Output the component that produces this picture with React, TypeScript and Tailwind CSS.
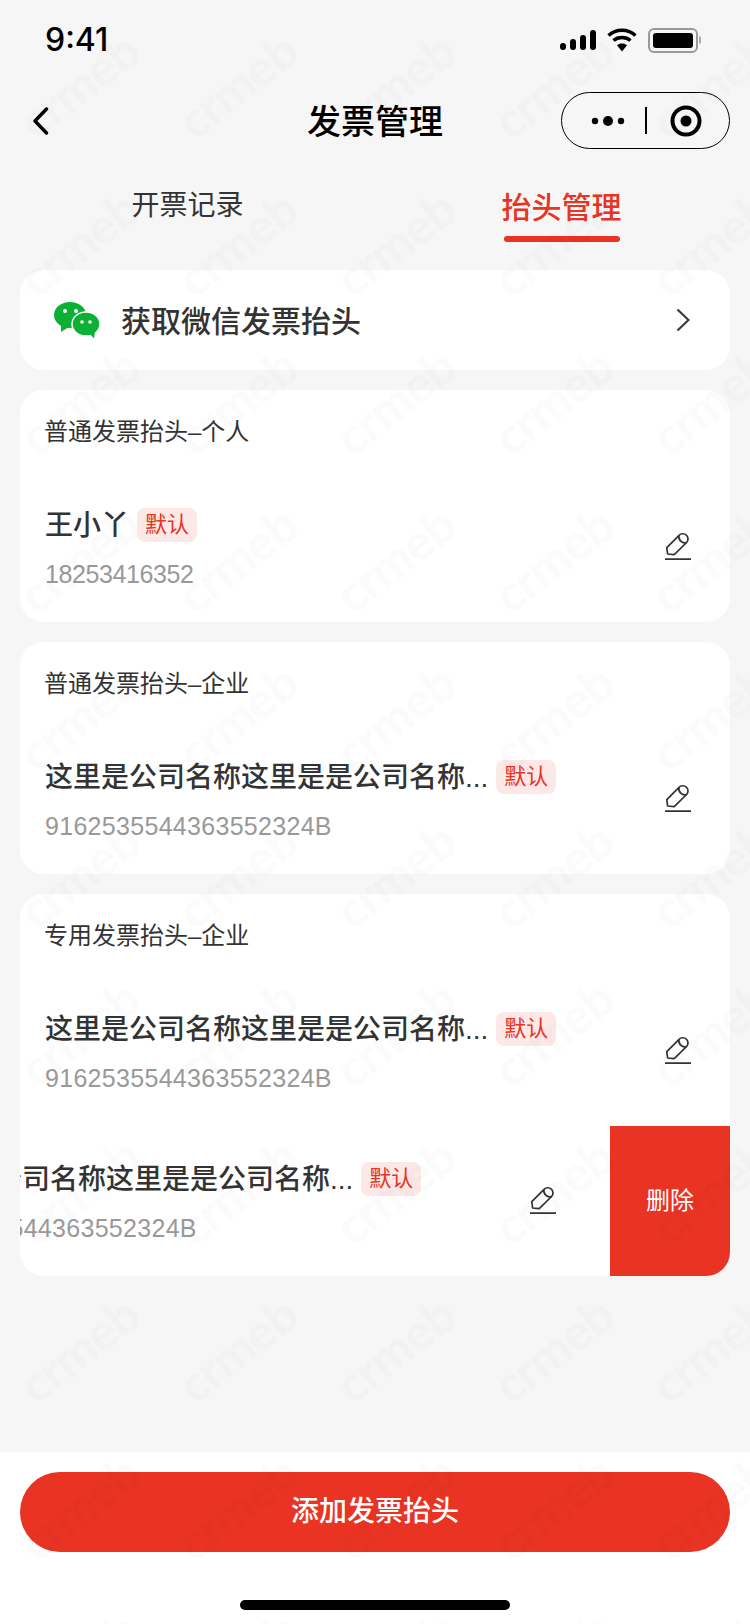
const FONT = "font-['Liberation_Sans','Noto_Sans_CJK_SC',sans-serif]";

interface RowProps {
  name: string;
  code: string;
  wide?: boolean;
}

function EditIcon() {
  return (
    <svg width="28" height="30" viewBox="0 0 28 30" fill="none" stroke="#333333" strokeWidth="1.7">
      <path d="M3.6 22 L2.8 15.6 L15 3.4 a5.2 5.2 0 0 1 7.6 7.1 L10.2 22.6 Z" strokeLinejoin="round" />
      <path d="M15 3.4 a6 6 0 0 0 7.6 7.1" />
      <path d="M1 27.2 H27" />
    </svg>
  );
}

function Badge() {
  return (
    <span className="ml-2 flex h-[34px] w-[60px] shrink-0 items-center justify-center rounded-lg bg-[#fce9e7] text-[22px] text-[#e93323]">
      默认
    </span>
  );
}

function InvoiceRow({ name, code, wide }: RowProps) {
  return (
    <div className="flex h-[150px] items-center justify-between pr-[38px] pl-[25px]">
      <div className="flex flex-col gap-[17px] pt-[2px]">
        <div className="flex h-[34px] items-center">
          <span className="whitespace-nowrap pt-[2px] text-[28px] font-medium text-[#333333]">{name}</span>
          <Badge />
        </div>
        <span className={`h-[30px] whitespace-nowrap text-[25px] leading-[30px] text-[#999999] ${wide ? "tracking-[0.3px]" : "tracking-[-0.4px]"}`}>
          {code}
        </span>
      </div>
      <EditIcon />
    </div>
  );
}

function Watermark() {
  const cells = Array.from({ length: 55 });
  return (
    <div className="pointer-events-none absolute inset-0 grid grid-cols-[repeat(5,158px)] auto-rows-[158px] overflow-hidden pt-[6px]">
      {cells.map((_, i) => (
        <div key={i} className="flex items-center justify-center">
          <span className="-rotate-[38deg] font-['Lato',sans-serif] text-[50px] font-black tracking-[-1px] text-black/[0.014]">
            crmeb
          </span>
        </div>
      ))}
    </div>
  );
}

export default function App() {
  const longName = "这里是公司名称这里是是公司名称...";
  const longCode = "9162535544363552324B";

  return (
    <div className={`relative flex h-[1624px] w-[750px] flex-col overflow-hidden bg-[#f6f6f6] ${FONT}`}>
      {/* 状态栏 */}
      <div className="flex h-[80px] items-center justify-between pr-[49px] pl-[45px]">
        <span className="font-['Inter',sans-serif] text-[32px] font-medium leading-none text-black">9:41</span>
        <div className="flex items-center gap-[11px]">
          <svg width="36" height="20" viewBox="0 0 36 20" fill="#000">
            <rect x="0" y="13" width="6" height="7" rx="3" />
            <rect x="10" y="9" width="6" height="11" rx="3" />
            <rect x="20" y="5" width="6" height="15" rx="3" />
            <rect x="30" y="0" width="6" height="20" rx="3" />
          </svg>
          <svg width="30" height="24" viewBox="0 0 30 24" fill="none" stroke="#000" strokeWidth="3.4">
            <path d="M1.5 7.5 C9 0.5 21 0.5 28.5 7.5" />
            <path d="M6.5 12.5 C11 8.5 19 8.5 23.5 12.5" />
            <path d="M15 23.5 L10 17.2 C12.8 15 17.2 15 20 17.2 Z" fill="#000" stroke="none" />
          </svg>
          <div className="flex items-center">
            <div className="h-[25px] w-[50px] rounded-[6px] border-2 border-[#999999] p-[3px]">
              <div className="h-full w-full rounded-[3px] bg-black" />
            </div>
            <div className="ml-[1px] h-[8px] w-[2px] rounded-r bg-[#aaaaaa]" />
          </div>
        </div>
      </div>

      {/* 导航栏 */}
      <div className="relative mt-[12px] flex h-[57px] items-center justify-between pr-[20px] pl-[32px]">
        <svg width="17" height="28" viewBox="0 0 17 28" fill="none" stroke="#000" strokeWidth="3.4" strokeLinecap="round" strokeLinejoin="round">
          <path d="M14.5 2 L3 14 L14.5 26" />
        </svg>
        <span className="absolute left-[307px] pt-[2px] text-[34px] font-medium leading-none text-black">发票管理</span>
        <div className="flex h-[57px] w-[169px] items-center rounded-full border-[1.5px] border-black pl-[29px]">
          <svg width="34" height="12" viewBox="0 0 34 12" fill="#000">
            <circle cx="4" cy="6" r="3.2" />
            <circle cx="17" cy="6" r="5" />
            <circle cx="30" cy="6" r="3.2" />
          </svg>
          <div className="ml-[20px] h-[27px] w-[1.5px] bg-black" />
          <svg className="ml-[23px]" width="32" height="32" viewBox="0 0 32 32">
            <circle cx="16" cy="16" r="13.5" fill="none" stroke="#000" strokeWidth="4" />
            <circle cx="16" cy="16" r="5.5" fill="#000" />
          </svg>
        </div>
      </div>

      {/* 标签 */}
      <div className="mb-[28px] grid grid-cols-2 pt-[43px]">
        <div className="flex justify-center">
          <span className="pt-px text-[28px] leading-[26px] text-[#333333]">开票记录</span>
        </div>
        <div className="flex flex-col items-center pr-[2px]">
          <span className="mt-[2px] h-[28px] text-[30px] font-medium leading-[28px] text-[#e93323]">抬头管理</span>
          <div className="mt-[14px] h-[6px] w-[116px] rounded-full bg-[#e93323]" />
        </div>
      </div>

      <div className="flex flex-col gap-5 px-5">
        {/* 微信抬头 */}
        <div className="flex h-[100px] items-center justify-between rounded-3xl bg-white pr-[40px] pl-[34px]">
          <div className="flex items-center">
            <svg width="46" height="37" viewBox="0 0 46 37">
              <ellipse cx="16" cy="13" rx="16" ry="13" fill="#0cb034" />
              <path d="M7 22 L7 30 L15 25 Z" fill="#0cb034" />
              <ellipse cx="32" cy="22" rx="14" ry="12" fill="#0cb034" stroke="#ffffff" strokeWidth="1.5" />
              <path d="M36 32 L40 36.5 L41 29 Z" fill="#0cb034" />
              <circle cx="11" cy="9" r="2" fill="#ffffff" />
              <circle cx="22" cy="9" r="2" fill="#ffffff" />
              <circle cx="28" cy="20" r="1.8" fill="#ffffff" />
              <circle cx="36" cy="20" r="1.8" fill="#ffffff" />
            </svg>
            <span className="ml-[21px] pt-[3px] text-[30px] font-medium leading-none text-[#333333]">获取微信发票抬头</span>
          </div>
          <svg width="14" height="24" viewBox="0 0 14 24" fill="none" stroke="#333333" strokeWidth="2">
            <path d="M1.5 1.5 L12.5 12 L1.5 22.5" />
          </svg>
        </div>

        {/* 普通发票 个人 */}
        <div className="overflow-hidden rounded-3xl bg-white">
          <div className="flex h-[82px] items-center pt-[2px] pl-6 text-2xl text-[#333333]">普通发票抬头–个人</div>
          <InvoiceRow name="王小丫" code="18253416352" />
        </div>

        {/* 普通发票 企业 */}
        <div className="overflow-hidden rounded-3xl bg-white">
          <div className="flex h-[82px] items-center pt-[2px] pl-6 text-2xl text-[#333333]">普通发票抬头–企业</div>
          <InvoiceRow name={longName} code={longCode} wide />
        </div>

        {/* 专用发票 企业 */}
        <div className="relative overflow-hidden rounded-3xl bg-white">
          <div className="flex h-[82px] items-center pt-[2px] pl-6 text-2xl text-[#333333]">专用发票抬头–企业</div>
          <InvoiceRow name={longName} code={longCode} wide />
          <div className="-translate-x-[135px]">
            <InvoiceRow name={longName} code={longCode} wide />
          </div>
          <div className="absolute right-0 bottom-0 flex h-[150px] w-[120px] items-center justify-center bg-[#e93323] text-2xl text-white">
            删除
          </div>
        </div>
      </div>

      {/* 底部按钮 */}
      <div className="mt-auto flex h-[172px] flex-col items-center bg-white px-5 pt-5">
        <div className="flex h-20 w-full items-center justify-center rounded-full bg-[#e93323] text-[28px] font-medium text-white">
          添加发票抬头
        </div>
        <div className="mt-[48px] h-[10px] w-[270px] rounded-full bg-black" />
      </div>

      <Watermark />
    </div>
  );
}
